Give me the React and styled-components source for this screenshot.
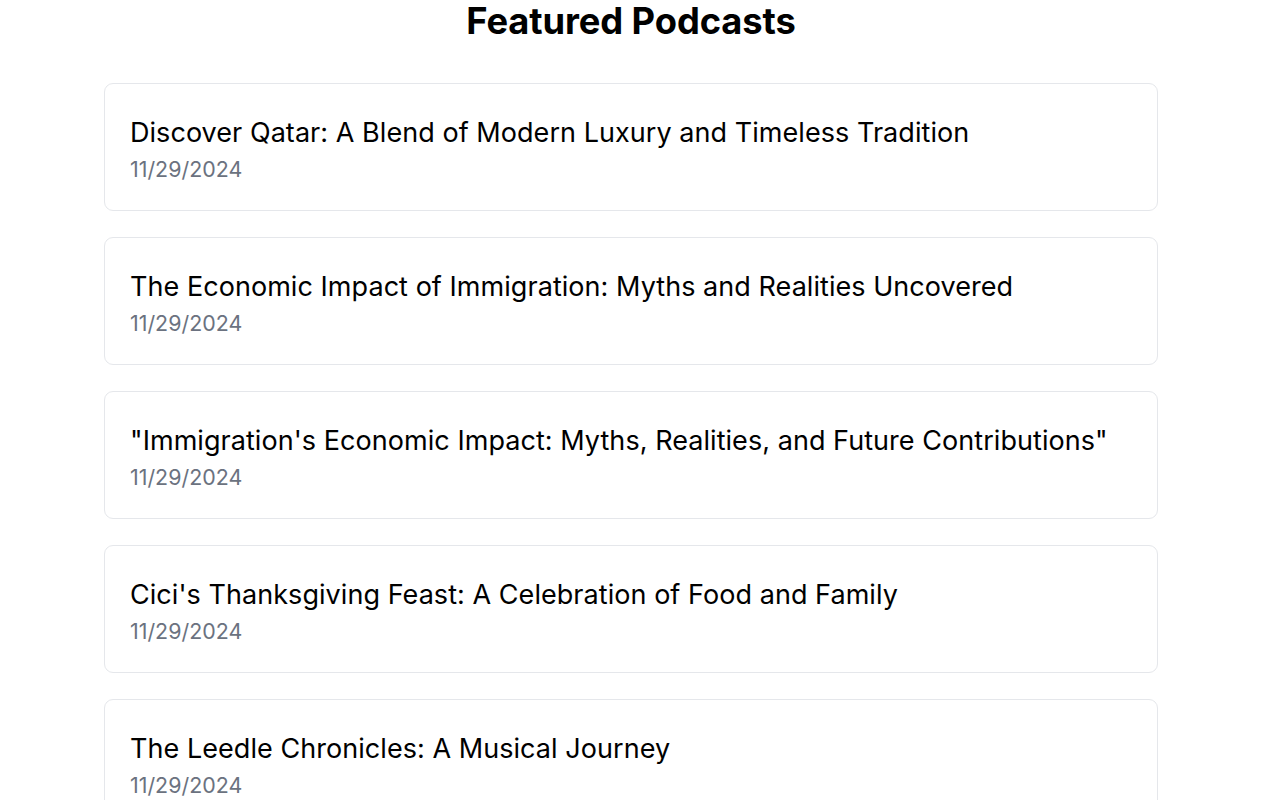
import React from 'react';
import styled, { createGlobalStyle } from 'styled-components';

const GlobalStyle = createGlobalStyle`
  html, body {
    margin: 0;
    padding: 0;
    background: #ffffff;
  }

  body {
    font-family: Inter, "Noto Sans", "Liberation Sans", sans-serif;
    color: #000000;
    overflow: hidden;
  }
`;

const Page = styled.main`
  width: 1262px;
  display: flex;
  flex-direction: column;
  align-items: center;
`;

const Heading = styled.h1`
  margin: 0;
  font-size: 36.3px;
  line-height: 42px;
  font-weight: 700;
  letter-spacing: -0.1px;
`;

const List = styled.ul`
  list-style: none;
  margin: 41px 0 0;
  padding: 0;
  width: 1054px;
  display: flex;
  flex-direction: column;
  gap: 26px;
`;

const Card = styled.li`
  box-sizing: border-box;
  height: 128px;
  padding: 33px 25px 0;
  border: 1px solid #e5e7eb;
  border-radius: 9px;
  background: #ffffff;
`;

const Title = styled.h2`
  margin: 0;
  font-size: 27px;
  line-height: 32px;
  font-weight: 400;
  letter-spacing: 0.05px;
  color: #000000;
`;

const DateText = styled.p`
  margin: 7px 0 0;
  font-size: 21.4px;
  line-height: 26px;
  color: #6b7280;
`;

const podcasts = [
  { id: 1, title: 'Discover Qatar: A Blend of Modern Luxury and Timeless Tradition', date: '11/29/2024' },
  { id: 2, title: 'The Economic Impact of Immigration: Myths and Realities Uncovered', date: '11/29/2024' },
  { id: 3, title: '"Immigration\'s Economic Impact: Myths, Realities, and Future Contributions"', date: '11/29/2024' },
  { id: 4, title: "Cici's Thanksgiving Feast: A Celebration of Food and Family", date: '11/29/2024' },
  { id: 5, title: 'The Leedle Chronicles: A Musical Journey', date: '11/29/2024' },
];

function App() {
  return (
    <>
      <GlobalStyle />
      <Page>
        <Heading>Featured Podcasts</Heading>
        <List>
          {podcasts.map((podcast) => (
            <Card key={podcast.id}>
              <Title>{podcast.title}</Title>
              <DateText>{podcast.date}</DateText>
            </Card>
          ))}
        </List>
      </Page>
    </>
  );
}

export default App;
